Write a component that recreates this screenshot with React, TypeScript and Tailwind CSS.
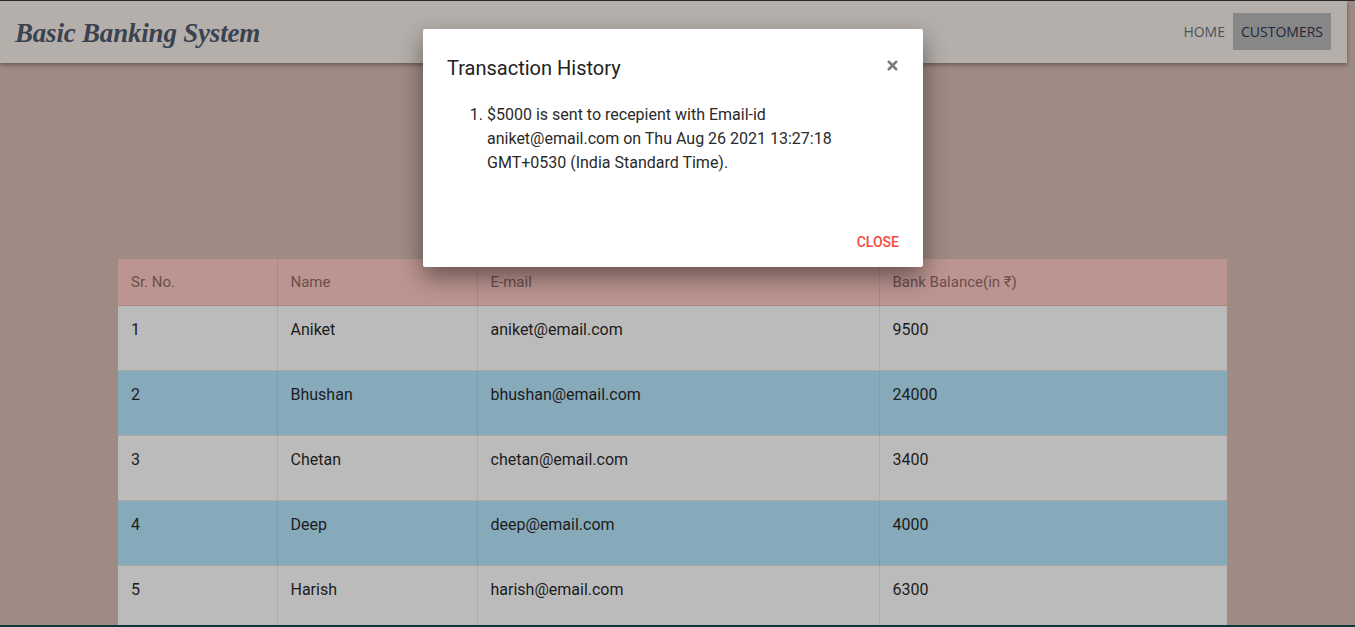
import { X } from 'lucide-react'

const customers = [
  { id: 1, name: 'Aniket', email: 'aniket@email.com', balance: 9500 },
  { id: 2, name: 'Bhushan', email: 'bhushan@email.com', balance: 24000 },
  { id: 3, name: 'Chetan', email: 'chetan@email.com', balance: 3400 },
  { id: 4, name: 'Deep', email: 'deep@email.com', balance: 4000 },
  { id: 5, name: 'Harish', email: 'harish@email.com', balance: 6300 },
]

const App = () => {
  return (
    <div className="relative h-[627px] overflow-hidden bg-[#a08a84] font-['Roboto',sans-serif]">
      <div className="h-px bg-[#2a2a2a]" />

      {/* Navbar */}
      <nav className="w-[1347px] h-[62px] bg-[#b4afab] shadow-[0_2px_4px_rgba(0,0,0,0.35)] flex items-center justify-between pl-[15px] pr-[16px]">
        <h1 className="font-['Liberation_Serif',serif] italic font-bold text-[27px] text-[#3b4250] tracking-[-0.2px] mt-[2px]">
          Basic Banking System
        </h1>
        <ul className="flex items-center font-['Open_Sans',sans-serif] text-[14px] uppercase -mt-[1px]">
          <li className="px-[8px] h-[37px] flex items-center text-[#4b5260]">Home</li>
          <li className="px-[8px] h-[37px] flex items-center bg-[#878787] text-[#1f2838]">Customers</li>
        </ul>
      </nav>

      {/* Table */}
      <div className="mt-[196px] ml-[118px] w-[1109px]">
        <table className="w-full border-collapse text-left">
          <thead>
            <tr className="bg-[#bc9590] border-b border-[#ad8580]">
              {[
                ['Sr. No.', 'w-[159px]'],
                ['Name', 'w-[200px]'],
                ['E-mail', 'w-[402px]'],
                ['Bank Balance(in ₹)', ''],
              ].map(([h, w]) => (
                <th key={h} className={`${w} h-[46px] px-[13px] pt-[1px] text-[15px] font-normal text-[#6a4f4d] border-r border-[#b08884] last:border-r-0`}>
                  {h}
                </th>
              ))}
            </tr>
          </thead>
          <tbody>
            {customers.map((c, i) => (
              <tr key={c.id} className={`${i % 2 === 0 ? 'bg-[#bbbbbb]' : 'bg-[#87aabb]'} border-b border-[#a9a9a9]`}>
                {[c.id, c.name, c.email, c.balance].map((v, j) => (
                  <td key={j} className={`h-[64px] px-[13px] pt-[12px] pb-[28px] align-top text-[16px] leading-[24px] text-[#1c1c1c] ${j < 3 ? (i % 2 === 0 ? 'border-r border-[#acacac]' : 'border-r border-[#7d9db0]') : ''}`}>
                    {v}
                  </td>
                ))}
              </tr>
            ))}
          </tbody>
        </table>
      </div>

      <div className="absolute left-0 right-0 bottom-0 h-[2px] bg-[#0e363c]" />

      {/* Modal */}
      <div className="absolute left-[423px] top-[29px] w-[500px] h-[238px] bg-white rounded-[2px] shadow-[0_10px_24px_rgba(0,0,0,0.45)] flex flex-col">
        <div className="flex items-start justify-between pl-[24px] pr-[23px] pt-[26px]">
          <h4 className="text-[20px] leading-[26px] text-[#222222]">Transaction History</h4>
          <X className="w-[15px] h-[15px] text-[#7a7a7a] mt-[3px]" strokeWidth={4} />
        </div>
        <ol className="list-decimal pl-[64px] pr-[60px] mt-[22px] text-[16px] leading-[24px] text-[#2a2a2a]">
          <li>$5000 is sent to recepient with Email-id aniket@email.com on Thu Aug 26 2021 13:27:18 GMT+0530 (India Standard Time).</li>
        </ol>
        <div className="mt-auto flex justify-end pr-[24px] pb-[14px]">
          <button className="text-[14px] font-medium uppercase text-[#f5493d]">Close</button>
        </div>
      </div>
    </div>
  )
}
export default App
